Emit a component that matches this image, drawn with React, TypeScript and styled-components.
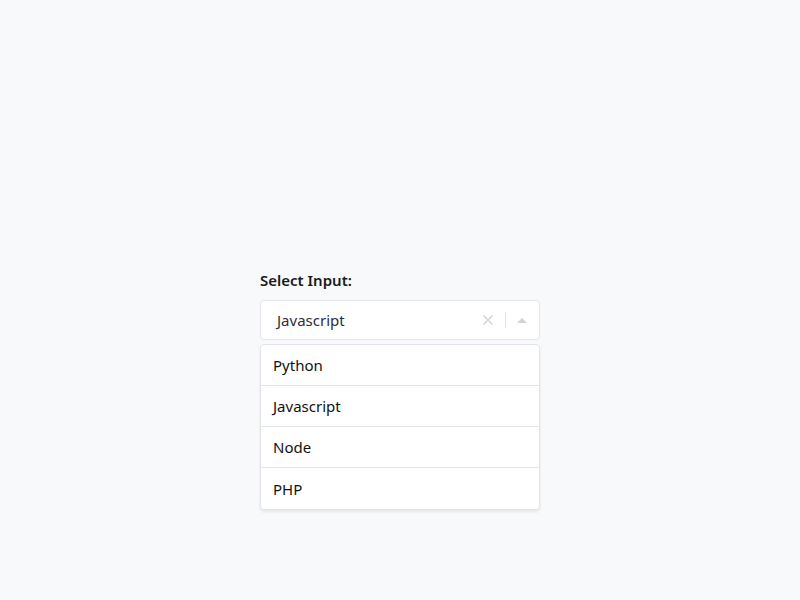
import React, { useState } from 'react';
import styled, { createGlobalStyle } from 'styled-components';

const GlobalStyle = createGlobalStyle`
    html, body {
        margin: 0;
        padding: 0;
        background-color: #f8f9fb;
        font-family: "Noto Sans", "Open Sans", sans-serif;
    }
`;

const TotalWrapper = styled.div`
    width: 800px;
    height: 600px;
    display: flex;
    justify-content: center;
    padding-top: 269px;
    box-sizing: border-box;
`;
const InnerWrapper = styled.div`
    width: 280px;
`;
const Label = styled.div`
    font-size: 15px;
    font-weight: 600;
    color: #1a1a1a;
    line-height: 22px;
    margin-bottom: 9px;
`;
const Control = styled.div`
    height: 40px;
    box-sizing: border-box;
    background-color: white;
    border: 1px solid #e3e5ea;
    border-radius: 4px;
    display: flex;
    align-items: center;
    padding: 0 12px 0 16px;
`;
const Value = styled.div`
    flex: 1;
    font-size: 15px;
    color: #2b2d42;
`;
const Indicators = styled.div`
    display: flex;
    align-items: center;
    gap: 11px;
`;
const Divider = styled.span`
    width: 1px;
    height: 16px;
    background-color: #e3e5ea;
`;
const Menu = styled.ul`
    list-style: none;
    margin: 4px 0 0 0;
    padding: 0;
    background-color: white;
    border: 1px solid #e3e5ea;
    border-radius: 4px;
    box-shadow: 0 2px 3px rgba(0, 0, 0, 0.08);
    overflow: hidden;
`;
const Option = styled.li<{ $last?: boolean }>`
    height: 41px;
    box-sizing: border-box;
    display: flex;
    align-items: center;
    padding: 0 12px;
    font-size: 15px;
    color: #111;
    border-bottom: ${(p) => (p.$last ? 'none' : '1px solid #e3e5ea')};
`;

const options = ['Python', 'Javascript', 'Node', 'PHP'];

const App = () => {
    const [value, setValue] = useState('Javascript');
    return <>
        <GlobalStyle />
        <TotalWrapper>
            <InnerWrapper>
                <Label>Select Input:</Label>
                <Control>
                    <Value>{value}</Value>
                    <Indicators>
                        <svg width="12" height="12" viewBox="0 0 12 12">
                            <path d="M1.5 1.5 L10.5 10.5 M10.5 1.5 L1.5 10.5" stroke="#cfd2d8" strokeWidth="1.4" />
                        </svg>
                        <Divider />
                        <svg width="10" height="6" viewBox="0 0 10 6">
                            <path d="M0 6 L5 1 L10 6 Z" fill="#cfd2d8" />
                        </svg>
                    </Indicators>
                </Control>
                <Menu>
                    {options.map((o, i) => (
                        <Option key={o} $last={i === options.length - 1} onClick={() => setValue(o)}>{o}</Option>
                    ))}
                </Menu>
            </InnerWrapper>
        </TotalWrapper>
    </>;
}

export default App;
